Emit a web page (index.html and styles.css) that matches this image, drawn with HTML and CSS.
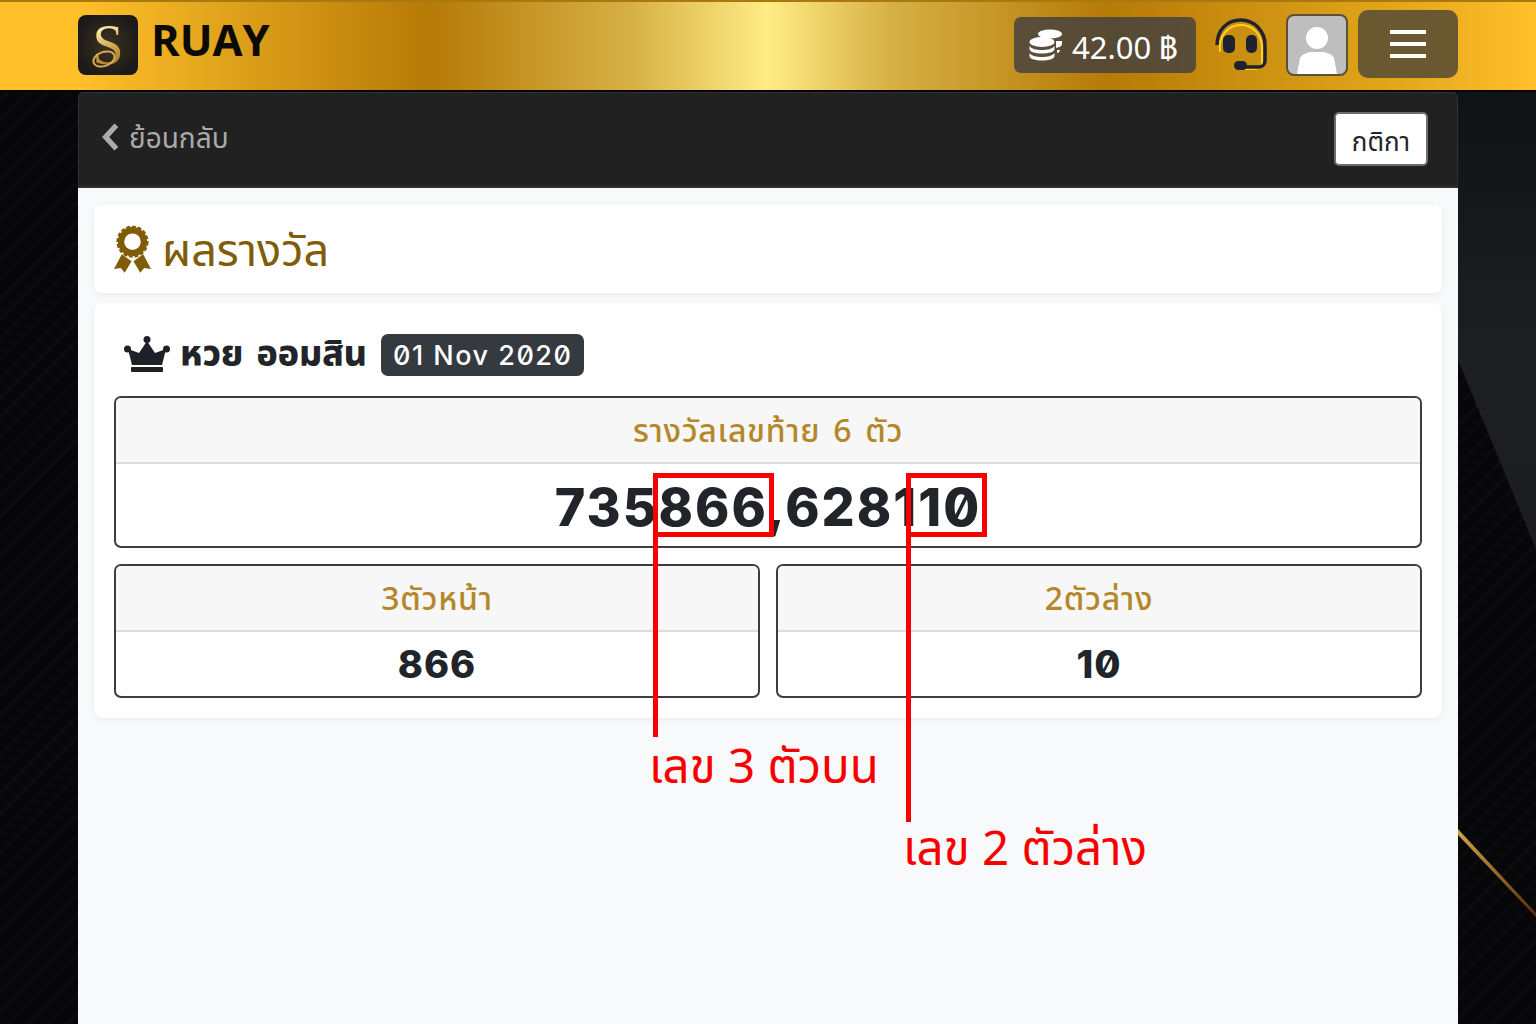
FILE: index.html
```html
<!DOCTYPE html>
<html lang="th">
<head>
  <meta charset="UTF-8">
  <meta name="viewport" content="width=device-width, initial-scale=1.0">
  <title>RUAY - ผลรางวัล</title>
  <link rel="stylesheet" href="styles.css">
</head>
<body>
  <!-- Page backdrop -->
  <svg class="backdrop" viewBox="0 0 1536 1024" preserveAspectRatio="none" aria-hidden="true">
    <defs>
      <linearGradient id="sheen" x1="0" y1="0" x2="0" y2="1">
        <stop offset="0" stop-color="#111215"/>
        <stop offset="0.6" stop-color="#1e1f23"/>
        <stop offset="1" stop-color="#1b1c20"/>
      </linearGradient>
      <linearGradient id="goldline" x1="0" y1="0" x2="1" y2="0">
        <stop offset="0" stop-color="#d0a04a"/>
        <stop offset="0.6" stop-color="#8a5f1c"/>
        <stop offset="1" stop-color="#5a2c10"/>
      </linearGradient>
    </defs>
    <polygon points="1458,360 1536,549 1536,90 1458,90" fill="url(#sheen)"/>
    <polygon points="1458,829 1536,913 1536,917 1458,835" fill="url(#goldline)"/>
  </svg>

  <!-- Top bar -->
  <header class="topbar">
    <a class="brand" href="#">
      <span class="brand-logo"><span class="brand-s">S</span></span>
      <span class="brand-name">RUAY</span>
    </a>
    <div class="topbar-right">
      <div class="balance">
        <svg class="coins" viewBox="0 0 34 32" aria-hidden="true">
          <ellipse cx="21" cy="5" rx="12" ry="4.5" fill="#fff"/>
          <path d="M27 12h6v3c0 2-2 3-6 4z" fill="#fff"/>
          <path d="M28 21h3c0 1-1 3-3 3z" fill="#fff"/>
          <ellipse cx="13" cy="13" rx="12.5" ry="5" fill="#fff"/>
          <path d="M0.500 17c2 3 7 4 12.500 4s10-1 12.500-4v3c0 3-6 4.500-12.500 4.500S0.500 23 0.500 20z" fill="#fff"/>
          <path d="M0.500 24c2 3 7 4 12.500 4s10-1 12.500-4v3c0 3-6 4.500-12.500 4.500S0.500 30 0.500 27z" fill="#fff"/>
        </svg>
        <span class="balance-text">42.00 ฿</span>
      </div>
      <svg class="headset" viewBox="0 0 54 54" aria-hidden="true">
        <path d="M5 34C3 18 13 7 26 7c12 0 20 9 21 21v16c0 4-3 7-7 7H30" fill="none" stroke="#ffd21f" stroke-width="2"/>
        <path d="M2 27C2 12 12 2 26 2c13 0 24 11 24 25v16c0 4-3 6-7 6H30" fill="none" stroke="#1f2230" stroke-width="3.500"/>
        <rect x="8" y="17" width="12" height="18" rx="5" fill="#1f2230"/>
        <rect x="31" y="17" width="11" height="18" rx="5" fill="#1f2230"/>
        <rect x="19" y="43" width="13" height="9" rx="4.500" fill="#1f2230"/>
      </svg>
      <div class="avatar">
        <svg viewBox="0 0 58 58" aria-hidden="true">
          <circle cx="29" cy="22" r="11" fill="#fff"/>
          <path d="M9 58l3-16c1-3 6-5 10-6h14c4 1 9 3 10 6l3 16z" fill="#fff"/>
        </svg>
      </div>
      <button class="menu-btn" type="button" aria-label="menu">
        <span></span><span></span><span></span>
      </button>
    </div>
  </header>

  <main class="page">
    <!-- Back bar -->
    <div class="subbar">
      <a class="back-link" href="#">
        <svg viewBox="0 0 18 28" aria-hidden="true"><path d="M14 3L4 14l10 11" fill="none" stroke="#a9aaad" stroke-width="5"/></svg>
        ย้อนกลับ
      </a>
      <button class="rules-btn" type="button">กติกา</button>
    </div>

    <div class="content">
      <section class="card title-card">
        <svg class="award" viewBox="0 0 38 50" aria-hidden="true">
          <path d="M8 30L0 45l7-1 4 5 7-12zM30 30l8 15-7-1-4 5-7-12z" fill="#7f5c05"/>
          <circle cx="19" cy="17" r="15" fill="#7f5c05"/>
          <circle cx="19" cy="17" r="15.500" fill="none" stroke="#7f5c05" stroke-width="2" stroke-dasharray="4 2"/>
          <circle cx="19" cy="17" r="8.500" fill="#fff"/>
        </svg>
        <h1>ผลรางวัล</h1>
      </section>

      <section class="card result-card">
        <div class="result-title">
          <svg class="crown" viewBox="0 0 46 38" aria-hidden="true">
            <circle cx="23" cy="3.500" r="3.500" fill="#1f2128"/>
            <circle cx="3.500" cy="13" r="3.500" fill="#1f2128"/>
            <circle cx="42.500" cy="13" r="3.500" fill="#1f2128"/>
            <path d="M23 5l8 12 11-4-4 16H8L4 13l11 4z" fill="#1f2128"/>
            <rect x="7" y="31" width="32" height="5" rx="1" fill="#1f2128"/>
          </svg>
          <h2>หวย ออมสิน</h2>
          <span class="date-badge">01 Nov 2020</span>
        </div>

        <div class="prize-box">
          <div class="prize-head">รางวัลเลขท้าย 6 ตัว</div>
          <div class="prize-main">735866,628110</div>
        </div>

        <div class="prize-row">
          <div class="prize-box">
            <div class="prize-head">3ตัวหน้า</div>
            <div class="prize-sub">866</div>
          </div>
          <div class="prize-box">
            <div class="prize-head">2ตัวล่าง</div>
            <div class="prize-sub">10</div>
          </div>
        </div>
      </section>
    </div>
  </main>

  <!-- Red annotations drawn over the screenshot -->
  <div class="mark mark-top"></div>
  <div class="mark mark-low"></div>
  <div class="mark-line line-top"></div>
  <div class="mark-line line-low"></div>
  <div class="mark-text text-top">เลข 3 ตัวบน</div>
  <div class="mark-text text-low">เลข 2 ตัวล่าง</div>
</body>
</html>
```

FILE: styles.css
```css
/* General */
* {
  box-sizing: border-box;
}

body {
  margin: 0;
  height: 1024px;
  overflow: hidden;
  position: relative;
  font-family: "Noto Sans Thai", "Noto Sans", "Open Sans", sans-serif;
  color: #212529;
  background:
    repeating-linear-gradient(135deg, rgba(255, 255, 255, 0.018) 0 3px, transparent 3px 14px),
    #070709;
}

.backdrop {
  position: absolute;
  inset: 0;
  width: 100%;
  height: 100%;
}

/* Top bar */
.topbar {
  position: relative;
  height: 92px;
  padding: 0 78px 2px;
  display: flex;
  align-items: center;
  justify-content: space-between;
  border-top: 2px solid #a9780f;
  border-bottom: 2px solid #050505;
  background: linear-gradient(90deg, #ffc02a 0%, #ffc02a 5%, #b67a07 28%, #d6b045 41%, #ffec85 50%, #d6b045 58%, #b67a07 72%, #e0a41a 90%, #ffc02a 100%);
}

.brand {
  display: flex;
  align-items: center;
  gap: 14px;
  text-decoration: none;
}

.brand-logo {
  position: relative;
  width: 60px;
  height: 60px;
  margin-top: -1px;
  border-radius: 8px;
  display: flex;
  align-items: center;
  justify-content: center;
  background: radial-gradient(circle, #3d3221 0%, #1c1a18 75%);
}

.brand-logo::after {
  content: "";
  position: absolute;
  left: 14px;
  bottom: 8px;
  width: 20px;
  height: 12px;
  border: 2px solid #d8ab4e;
  border-radius: 50%;
  transform: rotate(-20deg);
}

.brand-s {
  font-family: "Liberation Serif", serif;
  font-size: 56px;
  line-height: 56px;
  background: linear-gradient(160deg, #fff0b0 20%, #c89a3c 60%, #8a6420 100%);
  -webkit-background-clip: text;
  background-clip: text;
  color: transparent;
}

.brand-name {
  font-family: "Open Sans", sans-serif;
  font-weight: 700;
  font-size: 43.500px;
  line-height: 50px;
  margin-top: -11px;
  margin-left: -1px;
  color: #0c0a05;
}

.topbar-right {
  display: flex;
  align-items: center;
}

.balance {
  width: 182px;
  height: 56px;
  margin-right: 19px;
  padding-left: 15px;
  display: flex;
  align-items: center;
  gap: 9px;
  border-radius: 7px;
  background: rgba(60, 60, 66, 0.78);
  color: #fff;
  font-family: "Noto Sans", sans-serif;
  font-size: 31px;
}

.balance-text {
  margin-top: 5px;
}

.coins {
  width: 34px;
  height: 32px;
}

.headset {
  width: 54px;
  height: 54px;
  margin-right: 17px;
}

.avatar {
  width: 62px;
  height: 62px;
  margin-right: 10px;
  border: 2px solid #5b5038;
  border-radius: 8px;
  overflow: hidden;
  background: #bebebe;
}

.avatar svg {
  display: block;
  width: 100%;
  height: 100%;
}

.menu-btn {
  width: 100px;
  height: 68px;
  margin-top: -2px;
  padding: 0;
  border: 0;
  border-radius: 10px;
  display: flex;
  flex-direction: column;
  align-items: center;
  justify-content: center;
  gap: 8px;
  background: #6a5831;
}

.menu-btn span {
  width: 36px;
  height: 4px;
  background: #fff;
}

/* Main column */
.page {
  position: relative;
  width: 1380px;
  height: 932px;
  margin: 0 auto;
  display: flex;
  flex-direction: column;
}

.subbar {
  height: 96px;
  padding: 0 29px 2px 22px;
  display: flex;
  align-items: center;
  justify-content: space-between;
  border: 1px solid #2f3033;
  border-bottom-width: 2px;
  border-radius: 5px 5px 0 0;
  background: #212121;
}

.back-link {
  display: flex;
  align-items: center;
  gap: 8px;
  margin-top: 2px;
  color: #a9aaad;
  font-size: 28px;
  text-decoration: none;
}

.back-link svg {
  width: 20px;
  height: 30px;
  margin-top: -6px;
}

.rules-btn {
  width: 94px;
  height: 54px;
  padding: 8px 0 0;
  border: 2px solid #6c6d72;
  border-radius: 5px;
  background: #fff;
  color: #212529;
  font-family: inherit;
  font-size: 26px;
}

.content {
  flex: 1;
  padding: 17px 16px 0;
  display: flex;
  flex-direction: column;
  gap: 10px;
  background: #f8f9fa;
}

.card {
  border-radius: 8px;
  background: #fff;
  box-shadow: 0 2px 6px rgba(0, 0, 0, 0.06);
}

.title-card {
  height: 88px;
  padding: 0 20px;
  display: flex;
  align-items: center;
  gap: 11px;
}

.award {
  width: 37px;
  height: 49px;
}

.title-card h1 {
  margin: 6px 0 0;
  font-size: 45px;
  font-weight: 400;
  color: #7f5c05;
}

.result-card {
  height: 415px;
  padding: 30px 20px 0;
}

.result-title {
  height: 44px;
  padding-left: 10px;
  display: flex;
  align-items: center;
  gap: 10px;
}

.crown {
  width: 46px;
  height: 38px;
}

.result-title h2 {
  margin: 0 4px 0 0;
  font-size: 35.500px;
  font-weight: 800;
  word-spacing: 4px;
  color: #212529;
}

.date-badge {
  height: 42px;
  padding: 0 12px;
  display: flex;
  align-items: center;
  border-radius: 7px;
  background: #343a40;
  color: #fff;
  font-family: "Inter", sans-serif;
  font-feature-settings: "zero";
  font-size: 27px;
  font-weight: 500;
  letter-spacing: 1.500px;
}

.prize-box {
  border: 2px solid #3b3d40;
  border-radius: 7px;
  overflow: hidden;
  background: #fff;
}

.result-title + .prize-box {
  margin-top: 19px;
}

.prize-head {
  height: 66px;
  padding-top: 4px;
  display: flex;
  align-items: center;
  justify-content: center;
  border-bottom: 2px solid #dcdcdc;
  background: #f7f7f7;
  color: #b4872b;
  font-size: 32px;
  font-weight: 500;
  letter-spacing: 0.700px;
  word-spacing: 4px;
}

.prize-main,
.prize-sub {
  display: flex;
  align-items: center;
  justify-content: center;
  font-family: "Inter", sans-serif;
  font-feature-settings: "zero";
  font-weight: 800;
  color: #212529;
}

.prize-main {
  height: 82px;
  padding-top: 4px;
  font-size: 52px;
  letter-spacing: 2px;
}

.prize-sub {
  height: 64px;
  font-size: 38px;
  letter-spacing: 1px;
}

.prize-row {
  margin-top: 16px;
  display: grid;
  grid-template-columns: 1fr 1fr;
  gap: 16px;
}

/* Red annotations */
.mark {
  position: absolute;
  top: 473px;
  height: 64px;
  border: 5px solid #f60000;
}

.mark-top {
  left: 653px;
  width: 121px;
}

.mark-low {
  left: 906px;
  width: 81px;
}

.mark-line {
  position: absolute;
  top: 535px;
  width: 5px;
  background: #f60000;
}

.line-top {
  left: 653px;
  height: 202px;
}

.line-low {
  left: 906px;
  height: 287px;
}

.mark-text {
  position: absolute;
  color: #f60000;
  font-size: 47.500px;
  line-height: 60px;
  white-space: nowrap;
}

.text-top {
  left: 649px;
  top: 739px;
}

.text-low {
  left: 903px;
  top: 821px;
}
```
